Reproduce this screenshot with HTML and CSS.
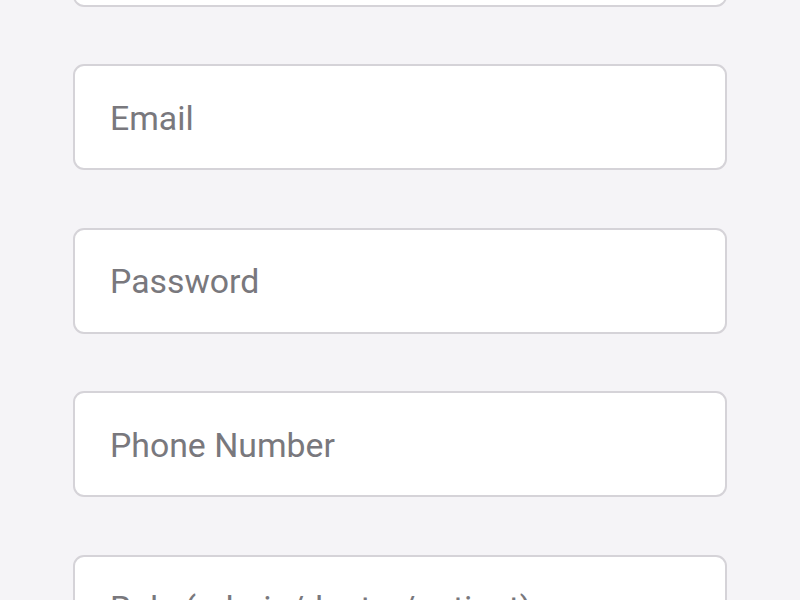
FILE: index.html
```html
<!DOCTYPE html>
<html lang="en">
<head>
<meta charset="utf-8">
<title>Register</title>
<link rel="stylesheet" href="styles.css">
</head>
<body>
<form class="form">
  <div class="field"><span class="placeholder">Name</span></div>
  <div class="field"><span class="placeholder">Email</span></div>
  <div class="field"><span class="placeholder">Password</span></div>
  <div class="field"><span class="placeholder">Phone Number</span></div>
  <div class="field"><span class="placeholder">Role (admin/doctor/patient)</span></div>
</form>
</body>
</html>
```
FILE: styles.css
```css
html, body {
  margin: 0;
  padding: 0;
  background: #f5f4f7;
  height: 100%;
  overflow: hidden;
}
body {
  font-family: Roboto, "Noto Sans", sans-serif;
}
.form {
  display: flex;
  flex-direction: column;
  gap: 57.5px;
  padding: 0 73px;
  margin-top: -99.5px;
}
.field {
  box-sizing: border-box;
  height: 106px;
  background: #ffffff;
  border: 2px solid #d5d3d8;
  border-radius: 11px;
  display: flex;
  align-items: center;
  padding: 3px 0 0 35px;
}
.placeholder {
  font-size: 33.8px;
  color: #79787d;
  line-height: 1;
}
```
